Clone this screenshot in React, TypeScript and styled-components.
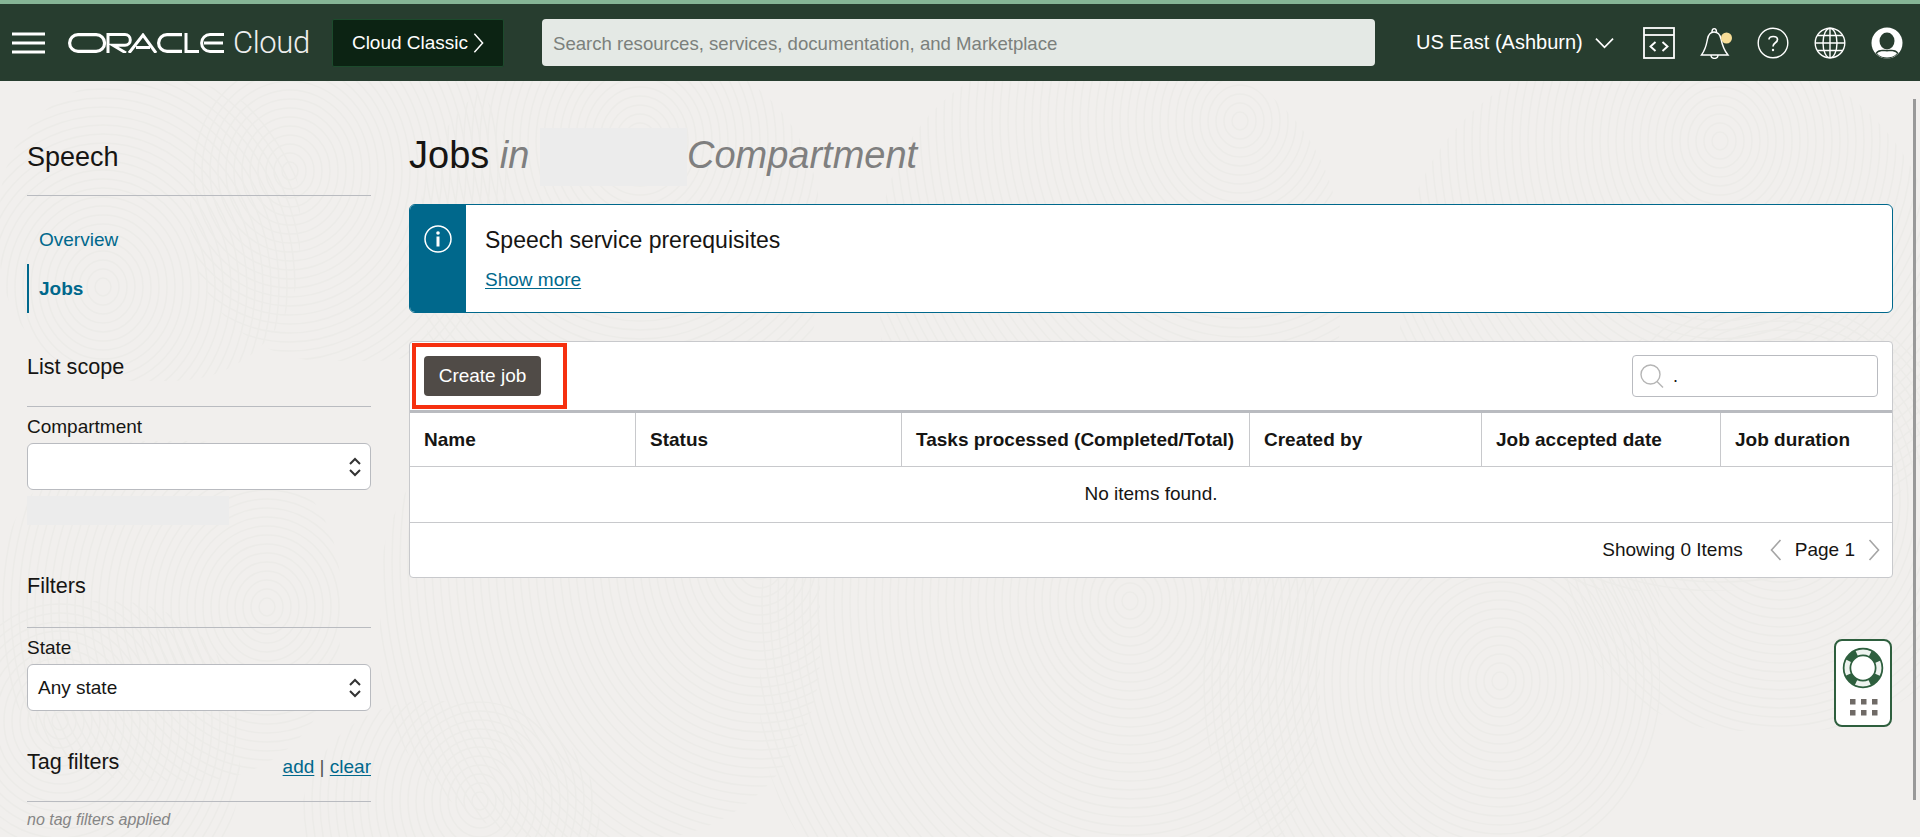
import React from "react";
import styled, { createGlobalStyle } from "styled-components";

const Global = createGlobalStyle`
  html, body { margin: 0; padding: 0; height: 100%; overflow: hidden; }
  body { background: #f1efed; font-family: "Liberation Sans", Arial, sans-serif; color: #161513; }
  * { box-sizing: border-box; }
`;

const Page = styled.div`
  position: relative;
  height: 837px;
  overflow: hidden;
  background: #f1efed;
`;
const Texture = styled.svg`
  position: absolute;
  inset: 81px 0 0 0;
  width: 100%;
  height: 756px;
  pointer-events: none;
`;
const TopBar = styled.header`
  position: relative;
  height: 81px;
  background: #273d2f;
  border-top: 4px solid #86b596;
  display: flex;
  align-items: center;
  color: #fff;
`;
const Menu = styled.svg`
  width: 34px;
  height: 24px;
  margin-left: 12px;
  margin-right: 22px;
  flex: none;
`;
const Logo = styled.svg`
  width: 156px;
  height: 20px;
  flex: none;
`;
const CloudWord = styled.span`
  font-family: Roboto, "Liberation Sans", sans-serif;
  font-size: 31px;
  font-weight: 300;
  letter-spacing: -0.4px;
  margin-left: 9px;
  color: #eee;
  width: 76px;
  flex: none;
`;
const ClassicButton = styled.button`
  margin-left: 23px;
  width: 172px;
  height: 48px;
  background: #0c2313;
  border: 1px solid #1c4a2c;
  border-radius: 2px;
  color: #fff;
  font: 19px "Liberation Sans", Arial, sans-serif;
  display: flex;
  align-items: center;
  justify-content: center;
  gap: 5px;
  flex: none;
`;
const SearchBox = styled.div`
  margin-left: 38px;
  width: 833px;
  height: 47px;
  border-radius: 4px;
  background: #e4e9e5;
  color: #7b807c;
  font-size: 18.6px;
  display: flex;
  align-items: center;
  padding-left: 11px;
  padding-top: 2px;
  flex: none;
`;
const Region = styled.div`
  margin-left: 41px;
  font-size: 20px;
  display: flex;
  align-items: center;
  gap: 12px;
  flex: none;
  width: 200px;
  white-space: nowrap;
`;
const RegionChevron = styled.svg`
  width: 19px;
  height: 12px;
  flex: none;
`;
const IconRow = styled.div`
  display: flex;
  align-items: center;
  gap: 25px;
  margin-left: 27px;
`;
const TopIcon = styled.svg`
  width: 32px;
  height: 32px;
  flex: none;
`;
const Body = styled.div`
  position: relative;
  display: flex;
  padding-left: 27px;
  padding-right: 27px;
`;
const Sidebar = styled.aside`
  width: 344px;
  flex: none;
  padding-top: 60px;
`;
const SideTitle = styled.h2`
  margin: 0;
  font-size: 27px;
  font-weight: 400;
  line-height: 32px;
  height: 55px;
  border-bottom: 1px solid #b9bbc0;
`;
const SideSub = styled.h3<{ $h: number }>`
  margin: 0;
  font-size: 21.6px;
  font-weight: 400;
  line-height: 26px;
  height: ${(p) => p.$h}px;
  border-bottom: 1px solid #b9bbc0;
  display: flex;
  justify-content: space-between;
`;
const SideNav = styled.nav`
  padding-top: 19px;
  margin-bottom: 41px;
`;
const NavItem = styled.a<{ $active?: boolean }>`
  display: block;
  height: 49px;
  line-height: 49px;
  padding-left: 10px;
  font-size: 19px;
  color: #00688c;
  font-weight: ${(p) => (p.$active ? 700 : 400)};
  border-left: 2px solid ${(p) => (p.$active ? "#00688c" : "transparent")};
`;
const Field = styled.label`
  display: block;
  font-size: 19px;
  line-height: 20px;
  padding-top: 10px;
`;
const SelectBox = styled.div`
  margin-top: 6px;
  height: 47px;
  border: 1px solid #b9bbc0;
  border-radius: 6px;
  background: #fff;
  display: flex;
  align-items: center;
  justify-content: space-between;
  padding: 0 8px 0 10px;
  font-size: 19px;
`;
const Redacted = styled.div`
  width: 202px;
  height: 29px;
  margin-top: 6px;
  margin-bottom: 48px;
  background: #ececec;
`;
const TagHeading = styled(SideSub)`
  margin-top: 38px;
`;
const TagLinks = styled.span`
  font-size: 19px;
  margin-top: 5px;
  color: #555;
`;
const Link = styled.a`
  color: #00688c;
  text-decoration: underline;
  text-underline-offset: 2px;
`;
const NoTags = styled.div`
  font-size: 16px;
  font-style: italic;
  color: #858585;
  padding-top: 9px;
`;
const Main = styled.main`
  flex: 1;
  margin-left: 38px;
  padding-top: 47px;
  min-width: 0;
`;
const PageTitle = styled.h1`
  margin: 0;
  height: 76px;
  font-size: 38px;
  line-height: 54px;
  font-weight: 400;
  display: flex;
  white-space: pre;
`;
const TitleDim = styled.em`
  color: #7f7f7f;
`;
const TitleGap = styled.span`
  width: 147px;
  height: 58px;
  background: #ececec;
  flex: none;
`;
const Notice = styled.section`
  height: 109px;
  display: flex;
  border: 1px solid #00688c;
  border-radius: 6px;
  background: #fff;
  overflow: hidden;
`;
const NoticeSide = styled.div`
  width: 56px;
  background: #00688c;
  flex: none;
  padding: 20px 0 0 14px;
`;
const NoticeBody = styled.div`
  padding: 21px 0 0 19px;
`;
const NoticeTitle = styled.div`
  font-size: 23px;
  line-height: 28px;
`;
const NoticeLink = styled(Link)`
  display: block;
  margin-top: 15px;
  font-size: 19px;
`;
const Card = styled.section`
  margin-top: 28px;
  border: 1px solid #c8c9cc;
  border-radius: 4px;
  background: #fff;
  height: 237px;
  overflow: hidden;
`;
const Toolbar = styled.div`
  height: 71px;
  border-bottom: 3px solid #b9bbc0;
  display: flex;
  align-items: center;
  justify-content: space-between;
  padding: 0 14px 0 14px;
  position: relative;
`;
const Highlight = styled.div`
  position: absolute;
  left: 2px;
  top: 1px;
  width: 155px;
  height: 66px;
  border: 4px solid #f6300f;
  pointer-events: none;
`;
const CreateButton = styled.button`
  width: 117px;
  height: 40px;
  background: #504b47;
  border: 0;
  border-radius: 4px;
  color: #fff;
  font: 19px "Liberation Sans", Arial, sans-serif;
`;
const SearchField = styled.div`
  width: 246px;
  height: 42px;
  border: 1px solid #b9bbc0;
  border-radius: 4px;
  display: flex;
  align-items: center;
  gap: 8px;
  padding-left: 6px;
  font-size: 18px;
`;
const HeadRow = styled.div`
  height: 54px;
  display: grid;
  grid-template-columns: 225px 266px 348px 232px 239px 1fr;
  border-bottom: 1px solid #c8c9cc;
`;
const HeadCell = styled.div`
  font-size: 19px;
  font-weight: 700;
  padding-left: 14px;
  display: flex;
  align-items: center;
  white-space: nowrap;
  & + & { border-left: 1px solid #c8c9cc; }
`;
const Empty = styled.div`
  height: 56px;
  line-height: 54px;
  text-align: center;
  font-size: 19px;
  border-bottom: 1px solid #c8c9cc;
`;
const Pager = styled.div`
  height: 54px;
  display: flex;
  align-items: center;
  justify-content: flex-end;
  padding-right: 11px;
  font-size: 19px;
`;
const PagerLabel = styled.span`
  margin-right: 26px;
`;
const PagerPage = styled.span`
  margin: 0 12px;
`;
const Scroll = styled.div`
  position: absolute;
  top: 99px;
  left: 1913px;
  width: 3px;
  height: 701px;
  background: #999;
`;
const HelpWidget = styled.button`
  position: absolute;
  left: 1834px;
  top: 639px;
  width: 58px;
  height: 88px;
  padding: 0;
  background: #fff;
  border: 2px solid #2e5f3e;
  border-radius: 8px;
  display: flex;
  justify-content: center;
  align-items: center;
`;

const Chev = ({ dir, color, w = 12, h = 24 }: { dir: "l" | "r"; color: string; w?: number; h?: number }) => (
  <svg width={w} height={h} viewBox="0 0 12 24" fill="none" stroke={color} strokeWidth="1.6">
    <path d={dir === "r" ? "M1.5 2 L10.5 12 L1.5 22" : "M10.5 2 L1.5 12 L10.5 22"} />
  </svg>
);
const UpDown = () => (
  <svg width="14" height="22" viewBox="0 0 14 22" fill="none" stroke="#333" strokeWidth="2">
    <path d="M2 8 L7 3 L12 8 M2 14 L7 19 L12 14" />
  </svg>
);

// Patchwork of contour rings, each clipped to its own blob, for the fingerprint-like page texture.
const patches: [number, number, number, number, number][] = [
  [103, 206, 0, 0, 300],
  [290, 90, 190, -40, 320],
  [267, 526, 0, 360, 340],
  [60, 640, -60, 520, 300],
  [640, 60, 420, -30, 400],
  [760, 480, 380, 320, 440],
  [1130, 520, 760, 300, 560],
  [1500, 600, 1200, 340, 460],
  [1780, 420, 1560, 230, 420],
  [1240, 40, 880, -30, 460],
  [1720, 60, 1400, -30, 540],
  [480, 720, 300, 620, 300],
];

const App: React.FC = () => (
  <Page>
    <Global />
    <Texture viewBox="0 0 1920 756" fill="none" stroke="#ecebe8" strokeWidth="1.5">
      <defs>
        {patches.map(([, , x, y, s], i) => (
          <clipPath id={`patch${i}`} key={i}>
            <rect x={x} y={y} width={s} height={s} rx={s * 0.42} />
          </clipPath>
        ))}
      </defs>
      {patches.map(([cx, cy, , , s], i) => (
        <g clipPath={`url(#patch${i})`} key={i}>
          {Array.from({ length: Math.ceil(s / 8) }, (_, k) => (
            <ellipse key={k} cx={cx} cy={cy} rx={(k + 1) * 8} ry={(k + 1) * 9} />
          ))}
        </g>
      ))}
    </Texture>
    <TopBar>
      <Menu viewBox="0 0 34 24" fill="#fff">
        <rect y="1.5" width="33" height="3" />
        <rect y="10.5" width="33" height="3" />
        <rect y="19.5" width="33" height="3" />
      </Menu>
      <Logo viewBox="0 0 156 20" fill="none" stroke="#fff" strokeWidth="3.2">
        <rect x="1.6" y="1.6" width="35" height="16.8" rx="8.4" />
        <path d="M40 20 V1.6 H57 a5.2 5.2 0 0 1 0 10.6 H45 L58 20" strokeWidth="3" />
        <path d="M61 20 L75 2 L88 20 M68 14.5 H82" strokeWidth="3" />
        <path d="M114 1.6 H99 a8.4 8.4 0 0 0 0 16.8 H114" />
        <path d="M118 0 V18.4 H131" strokeWidth="3" />
        <path d="M156 1.6 H142 a8.4 8.4 0 0 0 0 16.8 H156 M136 10 H155" strokeWidth="3" />
      </Logo>
      <CloudWord>Cloud</CloudWord>
      <ClassicButton>
        Cloud Classic <Chev dir="r" color="#fff" w={11} h={22} />
      </ClassicButton>
      <SearchBox>Search resources, services, documentation, and Marketplace</SearchBox>
      <Region>
        US East (Ashburn)
        <RegionChevron viewBox="0 0 20 12" fill="none" stroke="#fff" strokeWidth="1.8">
          <path d="M1 1.5 L10 10.5 L19 1.5" />
        </RegionChevron>
      </Region>
      <IconRow>
        <TopIcon viewBox="0 0 32 32" fill="none" stroke="#fff" strokeWidth="1.8">
          <rect x="1" y="1" width="30" height="30" />
          <path d="M1 8 H31" />
          <path d="M12.5 15 L7.5 19.5 L12.5 24 M19.5 15 L24.5 19.5 L19.5 24" strokeWidth="1.9" />
        </TopIcon>
        <TopIcon viewBox="0 0 32 32" fill="none" stroke="#fff" strokeWidth="1.4">
          <path d="M1.5 28 C6 22 6.5 17 7.5 12 C8.5 7 11 5 14 5 C17 5 20 7 21 12 C22 17 23 22 28 28 Z" />
          <path d="M12 5 C12 0.5 16.5 0.5 16.5 5 M11 28 C11 32.5 18 32.5 18 28" />
          <circle cx="26.5" cy="11" r="5.5" fill="#f7dd97" stroke="none" />
        </TopIcon>
        <TopIcon viewBox="0 0 32 32" fill="none" stroke="#fff" strokeWidth="1.4">
          <circle cx="16" cy="16" r="14.8" />
          <path d="M12 12.5 C12 8.5 20.5 8.5 20.5 12.5 C20.5 16 16 15.5 16 19.5" strokeWidth="1.7" />
          <circle cx="16" cy="23" r="1.2" fill="#fff" stroke="none" />
        </TopIcon>
        <TopIcon viewBox="0 0 32 32" fill="none" stroke="#fff" strokeWidth="1.4">
          <circle cx="16" cy="16" r="14.8" />
          <ellipse cx="16" cy="16" rx="7" ry="14.8" />
          <path d="M16 1.2 V30.8 M1.2 16 H30.8 M3.5 8.5 H28.5 M3.5 23.5 H28.5" />
        </TopIcon>
        <TopIcon viewBox="0 0 32 32">
          <circle cx="16" cy="16" r="15.5" fill="#fff" />
          <ellipse cx="16" cy="14" rx="7.5" ry="8.5" fill="#273d2f" />
          <path d="M4.5 26 C8 21.5 12 23 16 23 C20 23 24 21.5 27.5 26 C24 30 20 31.5 16 31.5 C12 31.5 8 30 4.5 26 Z" fill="#273d2f" />
          <path d="M6 26.5 C9 23.5 13 24.5 16 24.5 C19 24.5 23 23.5 26 26.5 C23 29.5 19.5 30.5 16 30.5 C12.5 30.5 9 29.5 6 26.5 Z" fill="#fff" />
        </TopIcon>
      </IconRow>
    </TopBar>
    <Body>
      <Sidebar>
        <SideTitle>Speech</SideTitle>
        <SideNav>
          <NavItem>Overview</NavItem>
          <NavItem $active>Jobs</NavItem>
        </SideNav>
        <SideSub $h={53}>List scope</SideSub>
        <Field>
          Compartment
          <SelectBox>
            <span />
            <UpDown />
          </SelectBox>
        </Field>
        <Redacted />
        <SideSub $h={55}>Filters</SideSub>
        <Field>
          State
          <SelectBox>
            Any state
            <UpDown />
          </SelectBox>
        </Field>
        <TagHeading $h={53}>
          Tag filters
          <TagLinks>
            <Link>add</Link> | <Link>clear</Link>
          </TagLinks>
        </TagHeading>
        <NoTags>no tag filters applied</NoTags>
      </Sidebar>
      <Main>
        <PageTitle>
          Jobs <TitleDim>in </TitleDim>
          <TitleGap />
          <TitleDim>Compartment</TitleDim>
        </PageTitle>
        <Notice>
          <NoticeSide>
            <svg width="28" height="28" viewBox="0 0 28 28" fill="none" stroke="#fff" strokeWidth="1.5">
              <circle cx="14" cy="14" r="13" />
              <circle cx="14" cy="8" r="1.8" fill="#fff" stroke="none" />
              <rect x="12.5" y="11.5" width="3" height="10" fill="#fff" stroke="none" />
            </svg>
          </NoticeSide>
          <NoticeBody>
            <NoticeTitle>Speech service prerequisites</NoticeTitle>
            <NoticeLink>Show more</NoticeLink>
          </NoticeBody>
        </Notice>
        <Card>
          <Toolbar>
            <CreateButton>Create job</CreateButton>
            <Highlight />
            <SearchField>
              <svg width="26" height="26" viewBox="0 0 26 26" fill="none" stroke="#b5b5b5" strokeWidth="1.4">
                <circle cx="11.5" cy="11.5" r="9.5" />
                <path d="M18 18.5 L24 24.5" />
              </svg>
              .
            </SearchField>
          </Toolbar>
          <HeadRow>
            <HeadCell>Name</HeadCell>
            <HeadCell>Status</HeadCell>
            <HeadCell>Tasks processed (Completed/Total)</HeadCell>
            <HeadCell>Created by</HeadCell>
            <HeadCell>Job accepted date</HeadCell>
            <HeadCell>Job duration</HeadCell>
          </HeadRow>
          <Empty>No items found.</Empty>
          <Pager>
            <PagerLabel>Showing 0 Items</PagerLabel>
            <Chev dir="l" color="#a5a5a5" w={14} h={24} />
            <PagerPage>Page 1</PagerPage>
            <Chev dir="r" color="#a5a5a5" w={14} h={24} />
          </Pager>
        </Card>
      </Main>
    </Body>
    <HelpWidget>
      <svg width="54" height="84" viewBox="0 0 54 84">
        <circle cx="27" cy="27" r="16" fill="none" stroke="#2e5f3e" strokeWidth="8.5" />
        <circle cx="27" cy="27" r="16" fill="none" stroke="#eef3ef" strokeWidth="5" strokeDasharray="14 11.13" strokeDashoffset="7" />
        <g fill="#6f6a66">
          <rect x="14" y="58" width="5.5" height="5.5" />
          <rect x="25" y="58" width="5.5" height="5.5" />
          <rect x="36" y="58" width="5.5" height="5.5" />
          <rect x="14" y="69" width="5.5" height="5.5" />
          <rect x="25" y="69" width="5.5" height="5.5" />
          <rect x="36" y="69" width="5.5" height="5.5" />
        </g>
      </svg>
    </HelpWidget>
    <Scroll />
  </Page>
);

export default App;
